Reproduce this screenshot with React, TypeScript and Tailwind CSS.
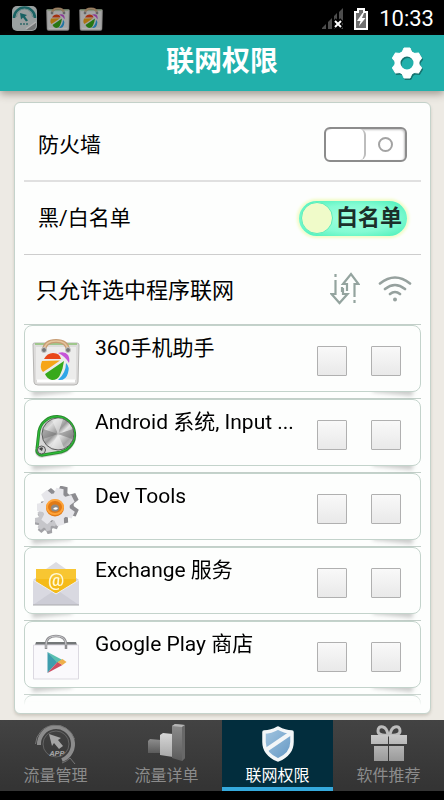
import { useState, type ReactNode } from 'react'
import clsx from 'clsx'

type AppItem = { id: string; name: string; icon: ReactNode }
type Tab = { id: string; label: string; icon: ReactNode }

const apps: AppItem[] = [
  { id: 'assistant', name: '360手机助手', icon: <AssistantIcon className="size-12" /> },
  { id: 'android', name: 'Android 系统, Input ...', icon: <KnobIcon /> },
  { id: 'devtools', name: 'Dev Tools', icon: <DevToolsIcon /> },
  { id: 'exchange', name: 'Exchange 服务', icon: <MailIcon /> },
  { id: 'play', name: 'Google Play 商店', icon: <PlayStoreIcon /> },
  { id: 'more', name: '', icon: null },
]

const tabs: Tab[] = [
  { id: 'manage', label: '流量管理', icon: <AppRingIcon /> },
  { id: 'detail', label: '流量详单', icon: <BarsIcon /> },
  { id: 'permission', label: '联网权限', icon: <ShieldIcon /> },
  { id: 'recommend', label: '软件推荐', icon: <GiftIcon /> },
]

export default function App() {
  const [firewall, setFirewall] = useState(false)
  const [whitelist, setWhitelist] = useState(true)
  const [tab, setTab] = useState('permission')

  return (
    <div className="flex h-screen flex-col bg-black font-[Roboto,'Noto_Sans_CJK_SC',sans-serif] text-black">
      <StatusBar />

      <header className="relative z-10 flex h-14 shrink-0 items-center justify-center bg-[#21b0ab] shadow-[0_3px_8px_rgba(60,50,40,0.45)]">
        <h1 className="pb-0.5 text-[28px] leading-8 font-bold text-white">联网权限</h1>
        <button type="button" aria-label="设置" className="absolute right-5 top-3">
          <GearIcon />
        </button>
      </header>

      <main className="flex min-h-0 flex-1 flex-col bg-[#edeae4] pt-[11px] pr-[13px] pb-1.5 pl-3.5">
        <section className="flex min-h-0 flex-1 flex-col rounded-md border border-[#c5d3cb] bg-[#fdfefd] px-[9px] pb-2 shadow-[0_2px_3px_rgba(90,80,60,0.2)]">
          <div className="flex h-[79px] shrink-0 items-center justify-between border-b-2 border-[#e0e0e0] pt-1.5 pr-3.5 pl-3.5">
            <span className="text-[21px] leading-7">防火墙</span>
            <button
              type="button"
              role="switch"
              aria-checked={firewall}
              aria-label="防火墙"
              onClick={() => setFirewall(!firewall)}
              className={clsx(
                'flex h-[35px] w-[83px] rounded-md border-2 border-[#8c8c8c] bg-white shadow-[inset_-1px_1px_2px_rgba(0,0,0,0.25)]',
                firewall && 'flex-row-reverse',
              )}
            >
              <span className="h-full w-10 rounded-md border-r-2 border-[#bdbdbd] bg-white" />
              <span className="flex h-full flex-1 items-center justify-center">
                <span className="size-[15px] rounded-full border-2 border-[#a3a3a3]" />
              </span>
            </button>
          </div>

          <div className="flex h-[73px] shrink-0 items-center justify-between border-b border-[#cdcdcd] pr-3.5 pl-3.5">
            <span className="text-[21px] leading-7">黑/白名单</span>
            <button
              type="button"
              role="switch"
              aria-checked={whitelist}
              aria-label="黑/白名单"
              onClick={() => setWhitelist(!whitelist)}
              className="flex h-[35px] w-[108px] items-center rounded-full bg-[radial-gradient(ellipse_at_center,#a0ffdf_0%,#84fbd3_55%,#43efb6_100%)] px-0.5 shadow-[0_0_3px_2px_#f1fbc4]"
            >
              <span className="size-8 shrink-0 rounded-full border border-[#5aeebc] bg-[#f0fbc9]" />
              <span className="flex-1 text-center text-[22px] leading-8 font-bold text-[#1b2f2a]">
                {whitelist ? '白名单' : '黑名单'}
              </span>
            </button>
          </div>

          <div className="flex h-[69px] shrink-0 items-center justify-between pt-0.5 pr-[9px] pl-3">
            <span className="text-[22px] leading-7">只允许选中程序联网</span>
            <span className="flex items-center gap-[18px] pb-1">
              <DataIcon />
              <WifiIcon />
            </span>
          </div>

          <ul className="min-h-0 flex-1 overflow-hidden mask-b-from-[calc(100%-12px)]">
            {apps.map((app) => (
              <AppRow key={app.id} app={app} />
            ))}
          </ul>
        </section>
      </main>

      <nav className="grid h-[71px] shrink-0 grid-cols-4">
        {tabs.map((item) => (
          <button
            key={item.id}
            type="button"
            aria-current={tab === item.id ? 'page' : undefined}
            onClick={() => setTab(item.id)}
            className={clsx(
              'flex flex-col items-center border-b-4 pt-1 text-[16px] leading-5',
              tab === item.id
                ? 'border-[#35a9dc] bg-[#022d3d] text-white'
                : 'border-[#343434] bg-linear-to-b from-[#434343] to-[#343434] text-[#8b8b8b]',
            )}
          >
            {item.icon}
            <span>{item.label}</span>
          </button>
        ))}
      </nav>
      <div className="h-[9px] shrink-0 bg-black" />
    </div>
  )
}

function AppRow({ app }: { app: AppItem }) {
  return (
    <li className="h-[74px] border-t border-[#c3cfc9]">
      <div className="relative">
        <span className="absolute -bottom-0.5 left-2 h-2 w-10 -rotate-6 bg-black/20 blur-[2px]" />
        <span className="absolute right-2 -bottom-0.5 h-2 w-10 rotate-6 bg-black/20 blur-[2px]" />
        <div className="relative flex h-[67px] items-start rounded-lg border border-[#c3d3cb] bg-[#fdfefd] pr-[19px] pl-[7px]">
          <span className="mt-3 size-12 shrink-0">{app.icon}</span>
          <span className="mt-2 ml-[15px] min-w-0 flex-1 text-[21px] leading-7 whitespace-nowrap">{app.name}</span>
          {app.name && (
            <span className="mt-5 ml-4 flex gap-6">
              <Tick label={`${app.name} 移动数据`} />
              <Tick label={`${app.name} WiFi`} />
            </span>
          )}
        </div>
      </div>
    </li>
  )
}

function Tick({ label }: { label: string }) {
  return (
    <input
      type="checkbox"
      aria-label={label}
      className="size-[30px] appearance-none rounded-[1px] border border-[#b0b0b0] bg-linear-to-b from-[#f9f9f9] to-[#e9e9e9] checked:from-[#5fd0c9] checked:to-[#21b0ab]"
    />
  )
}

function StatusBar() {
  return (
    <div className="flex h-[35px] shrink-0 items-center bg-black pt-0.5 pr-2.5 pl-3 text-white">
      <div className="flex items-center gap-[9px] opacity-70">
        <svg viewBox="0 0 25 25" className="size-[25px]">
          <rect width="25" height="25" rx="5" fill="#dce4e4" />
          <path d="M2 12a10.500 10.500 0 0 1 21 0" fill="none" stroke="#268c8d" strokeWidth="2.500" />
          <path d="M4.500 11a8 8 0 0 1 16 0" fill="none" stroke="#98c9c8" />
          <path d="m8 7 7 2-2 1.500 3 4-2 1-3-4-2 2z" fill="#238b8d" />
          <path d="M8 18h9" stroke="#69a9a9" strokeWidth="2" strokeDasharray="2 1" />
          <path d="m14 24 10-8v3q0 5-5 5z" fill="#a5a9a9" />
          <path d="m14 23 10-7" stroke="#fff" strokeWidth="1.500" />
        </svg>
        <AssistantIcon className="size-6" />
        <AssistantIcon className="size-6" />
      </div>
      <div className="ml-auto flex items-center">
        <svg viewBox="0 0 24 24" className="mr-2 size-6">
          <path d="M1 22v-1l4-4v5zM7 22v-7l4-4v11zM13 22V9l3-3v16zM18 22V5l4-4v21z" fill="#4d4d4d" />
          <path d="m13 13 8 8m0-8-8 8" stroke="#000" strokeWidth="5" />
          <path d="m14 14 6 6m0-6-6 6" stroke="#fff" strokeWidth="2" />
        </svg>
        <svg viewBox="0 0 16 24" className="mr-2.5 h-6 w-4">
          <path d="M5 2h6v3h3v17H2V5h3z" fill="#6f6f6f" stroke="#fff" strokeWidth="2" />
          <path d="M9.500 6 4 14h3.500L6 19l6.500-8H9l2-5z" fill="#fff" />
        </svg>
        <span className="text-[22px] leading-8">10:33</span>
      </div>
    </div>
  )
}

function GearIcon() {
  return (
    <svg viewBox="0 0 34 34" className="size-[34px]">
      <g transform="translate(17 16)">
        <g transform="translate(1 1.500)" fill="#16726f" stroke="#16726f">
          <GearShape />
        </g>
        <g fill="#fff" stroke="#fff">
          <GearShape />
        </g>
      </g>
    </svg>
  )
}

function GearShape() {
  return (
    <>
      <circle r="9.500" fill="none" strokeWidth="6" />
      {[0, 60, 120, 180, 240, 300].map((angle) => (
        <path key={angle} d="M-5-10.500-3-15H3L5-10.500z" strokeLinejoin="round" transform={`rotate(${angle})`} />
      ))}
    </>
  )
}

function DataIcon() {
  return (
    <svg viewBox="0 0 30 34" className="h-[34px] w-[30px]" fill="none" stroke="#94a49f" strokeWidth="2.200">
      <path d="M5.500 2v3M5.500 8v14H1.500L9.500 31l8-9H13v-6" />
      <path d="M24.500 31v-3M24.500 25V12h4L21 2l-8 10h4v7M12 15v5" />
    </svg>
  )
}

function WifiIcon() {
  return (
    <svg viewBox="0 0 34 28" className="h-7 w-[34px]" fill="none" stroke="#96a19e" strokeWidth="2.600" strokeLinecap="round">
      <path d="M2 8.500q15-12 30 0M7 14q10-8 20 0M12 19q5-4 10 0" />
      <circle cx="17" cy="24.500" r="2" fill="#96a19e" stroke="none" />
    </svg>
  )
}

function AssistantIcon({ className }: { className: string }) {
  return (
    <svg viewBox="0 0 48 48" className={className}>
      <path d="M1 6q0-1 2-1h42q2 0 2 2l-1 37q0 3-4 3H6q-4 0-4-3z" fill="#dddcdb" stroke="#b6b5b3" />
      <path d="M4 9h40v33H4z" fill="#ececeb" />
      <path d="M5 43h38" stroke="#fff" strokeWidth="3" />
      <path d="M3 6h42" stroke="#9fc78d" strokeWidth="2" />
      <path d="M12 12Q13 3 24 3t12 9" fill="none" stroke="#c79d74" strokeWidth="4" />
      <path d="M12 12Q13 3 24 3t12 9" fill="none" stroke="#e5c59e" strokeWidth="1.500" />
      <circle cx="12" cy="12" r="2.500" fill="#777" stroke="#c4c4c4" />
      <circle cx="36" cy="12" r="2.500" fill="#777" stroke="#c4c4c4" />
      <path d="M12 21q3-6 9-6 7 0 8 6z" fill="#e94719" />
      <path d="M28 22.500 10 23q-3 7 1 11 8-5 17-11.500z" fill="#f6a519" />
      <path d="M32 23 13 36q2 5 7 6 6 0 8-5 3-6 4-14z" fill="#38a91b" />
      <path d="M34 25q0 10-8 17 8 1 10-7 2-6-2-10z" fill="#30a6e7" />
      <path d="M26 15q7-2 10 2 2 3 1 8-4-7-11-10z" fill="#c653d8" />
    </svg>
  )
}

function KnobIcon() {
  return (
    <svg viewBox="0 0 48 48" className="size-12">
      <defs>
        <linearGradient id="knob" x1="0" y1="0" x2="1" y2="1">
          <stop offset="0" stopColor="#777" />
          <stop offset=".25" stopColor="#dcdcdc" />
          <stop offset=".45" stopColor="#9a9a9a" />
          <stop offset=".55" stopColor="#e4e4e4" />
          <stop offset=".75" stopColor="#a5a5a5" />
          <stop offset="1" stopColor="#dedede" />
        </linearGradient>
      </defs>
      <path d="M7 20A18 18 0 1 1 29 41L11 44A5 5 0 0 1 5 37Z" fill="#777" stroke="#777" strokeWidth="3" opacity=".3" />
      <path d="M7 19A18 18 0 1 1 29 40L11 43A5 5 0 0 1 5 37Z" fill="#d6d6d6" stroke="#2a8f30" strokeWidth="3" />
      <path d="M7 19A18 18 0 1 1 29 40L11 43A5 5 0 0 1 5 37Z" fill="none" stroke="#2cc436" />
      <circle cx="26" cy="22" r="16" fill="url(#knob)" stroke="#5c5c5c" />
      <path d="m26 22-15-5q-1 5 0 10zM26 22l15-5q1 6-1 10z" fill="#6d6d6d" opacity=".5" />
      <path d="m26 22-6-14q6-3 11-1zM26 22l-7 13q7 4 13 1z" fill="#eee" opacity=".6" />
      <circle cx="9.500" cy="38" r="4" fill="#cfcfcf" stroke="#555" />
      <path d="M7 37q2-3 4-1l-1 3z" fill="#444" />
    </svg>
  )
}

function DevToolsIcon() {
  return (
    <svg viewBox="0 0 48 48" className="size-12">
      <g strokeLinejoin="round">
        <g transform="translate(15 36)" fill="#a2a2a6">
          <CogTeeth radius={12} />
        </g>
        <g transform="translate(14 34)" fill="#c6c6ca">
          <CogTeeth radius={11} />
        </g>
        <g transform="translate(28 19)" fill="#8c8c90">
          <CogTeeth radius={19} />
        </g>
        <g transform="translate(24 21)" fill="#e6e6ea">
          <CogTeeth radius={19} />
        </g>
      </g>
      <ellipse cx="23" cy="22" rx="9" ry="8.500" fill="#e07a16" />
      <ellipse cx="23" cy="21" rx="8" ry="7" fill="none" stroke="#ffa338" strokeWidth="2" />
      <ellipse cx="23" cy="22" rx="4" ry="3.500" fill="#8f8a84" />
      <path d="M21 23q2-3 5-1-1 3-5 1z" fill="#fff" />
    </svg>
  )
}

function CogTeeth({ radius }: { radius: number }) {
  return (
    <g transform={`scale(${radius / 18}) rotate(12)`}>
      <circle r="13" />
      {[0, 51, 103, 154, 206, 257, 309].map((angle) => (
        <path key={angle} d="M-5-10-3.500-18H3.500L5-10z" transform={`rotate(${angle})`} />
      ))}
    </g>
  )
}

function MailIcon() {
  return (
    <svg viewBox="0 0 48 48" className="size-12">
      <path d="m1 20 23-17 23 17v25H1z" fill="#d2d2d8" />
      <path d="m7 14 17-12 17 12z" fill="#dddde2" />
      <path d="M4 9h40v24H4z" fill="#f5bb19" />
      <path d="M4 9h40v10H4z" fill="#f8c632" />
      <path d="m1 20 23 14 23-14v25H1z" fill="#d9d9e1" />
      <path d="m1 45 19-13 4 2 4-2 19 13z" fill="#cdcdd6" />
      <path d="m1 20 23 14 23-14" fill="none" stroke="#efeff3" />
      <path d="M1 45h46" stroke="#aaaaae" />
      <text x="24" y="26" textAnchor="middle" fontSize="18" fontWeight="500" fill="#fff9d8">
        @
      </text>
    </svg>
  )
}

function PlayStoreIcon() {
  return (
    <svg viewBox="0 0 48 48" className="size-12">
      <path d="m3 11 1-3h40l1 3v3H3z" fill="#737778" />
      <path d="M1.500 11h45v34h-45z" fill="#faf9fc" stroke="#dcd9e1" />
      <path d="M14 15v-4Q14 2 24 2t10 9v4" fill="none" stroke="#8e8e91" strokeWidth="2.500" />
      <path d="M14 14v-3Q14 2 24 2t10 9" fill="none" stroke="#c9c9cc" />
      <path d="M15.500 18v21l10-11z" fill="#3e9dad" />
      <path d="m15.500 18 15 8-5 3z" fill="#59bfb0" />
      <path d="m15.500 39 15-8-5-3z" fill="#ce4c61" />
      <path d="m25.500 28 5-3 4 3-4 3z" fill="#efaf4a" />
    </svg>
  )
}

function AppRingIcon() {
  return (
    <svg viewBox="0 0 44 42" className="h-[42px] w-11" fill="none">
      <path d="M5 21a17 17 0 1 1 23 15" stroke="#8c8c8c" strokeWidth="4" />
      <path d="M1.500 20a20 20 0 0 1 39-5M36 34a20 20 0 0 1-8 5" stroke="#747474" />
      <circle cx="22" cy="20" r="13" stroke="#646464" />
      <path d="m36 34 5 6" stroke="#767676" />
      <path d="m15 10 12 4-3 2 5 6-4 3-5-6-2 3z" fill="#a5a5a5" />
      <text x="23" y="32" textAnchor="middle" fontSize="8" fontWeight="bold" fontStyle="italic" fill="#a2a2a2">
        APP
      </text>
    </svg>
  )
}

function BarsIcon() {
  return (
    <svg viewBox="0 0 44 42" className="h-[42px] w-11">
      <defs>
        <linearGradient id="bar" x1="0" y1="0" x2="0" y2="1">
          <stop stopColor="#8d8d8d" />
          <stop offset="1" stopColor="#5b5b5b" />
        </linearGradient>
        <linearGradient id="barLight" x1="0" y1="0" x2="0" y2="1">
          <stop stopColor="#d6d6d6" />
          <stop offset="1" stopColor="#a8a8a8" />
        </linearGradient>
      </defs>
      <path d="m3 17 2-2 11 1v13H3z" fill="url(#bar)" />
      <path d="m15 11 3-2 10 1v23l-13-2z" fill="url(#barLight)" />
      <path d="m27 2 3-2 10 1v33l-3 3-10-3z" fill="url(#bar)" />
      <path d="m27 2 3-2 10 1-3 2z" fill="#b5b5b5" />
      <path d="m37 3 3-2v33l-3 3z" fill="#686868" />
    </svg>
  )
}

function ShieldIcon() {
  return (
    <svg viewBox="0 0 44 42" className="h-[42px] w-11">
      <defs>
        <linearGradient id="shield" x1="0" y1="0" x2="1" y2="1">
          <stop stopColor="#a4c6e0" />
          <stop offset="1" stopColor="#6397c4" />
        </linearGradient>
      </defs>
      <path d="M22 4q7 4 14 4v10q0 12-14 18Q8 30 8 18V8q7 0 14-4z" fill="url(#shield)" stroke="#f3f6f8" strokeWidth="3.500" strokeLinejoin="round" />
      <path d="m10 26 25-17" stroke="#f3f6f8" strokeWidth="4" />
    </svg>
  )
}

function GiftIcon() {
  return (
    <svg viewBox="0 0 44 42" className="h-[42px] w-11">
      <defs>
        <linearGradient id="gift" x1="0" y1="0" x2="0" y2="1">
          <stop stopColor="#c8c8c8" />
          <stop offset="1" stopColor="#9a9a9a" />
        </linearGradient>
      </defs>
      <path d="M21 11q-10 1-10-4t5-4q4 1 5 8zm2 0q10 1 10-4t-5-4q-4 1-5 8z" fill="none" stroke="#bcbcbc" strokeWidth="3" />
      <path d="M4 11h17v9H4zM22 11h18v9H22zM7 22h14v15H7zM22 22h15v15H22z" fill="url(#gift)" />
    </svg>
  )
}
